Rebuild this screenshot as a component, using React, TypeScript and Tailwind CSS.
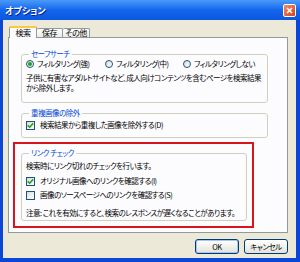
import React from "react";

const jp = "font-['Noto_Sans_CJK_JP',sans-serif] [font-feature-settings:'palt']";

const Radio: React.FC<{ checked?: boolean; label: string; width: string }> = ({ checked, label, width }) => (
  <div className={`flex items-center h-[10px] ${width}`}>
    <div className="w-[8px] h-[8px] rounded-full border border-[#1c5180] bg-gradient-to-br from-[#dcdcd5] to-white flex items-center justify-center shrink-0">
      {checked && <div className="w-[4px] h-[4px] rounded-full bg-[#21a121]" />}
    </div>
    <span className="ml-[3px] leading-[10px] whitespace-nowrap">{label}</span>
  </div>
);

const Check: React.FC<{ checked?: boolean; label: string }> = ({ checked, label }) => (
  <div className="flex items-center h-[10px]">
    <div className="w-[9px] h-[9px] border border-[#1c5180] bg-gradient-to-br from-[#dcdcd5] to-white flex items-center justify-center shrink-0">
      {checked && (
        <svg width="7" height="7" viewBox="0 0 7 7">
          <path d="M0.8 3.4 L2.6 5.2 L6.2 1.4" stroke="#21a121" strokeWidth="1.6" fill="none" />
        </svg>
      )}
    </div>
    <span className="ml-[5px] leading-[10px] whitespace-nowrap">{label}</span>
  </div>
);

const Group: React.FC<{ title: string; className: string; children: React.ReactNode }> = ({ title, className, children }) => (
  <fieldset className={`border border-[#d0d0bf] rounded-[3px] ${className}`}>
    <legend className="ml-[3px] px-[2px] text-[#0046d5] leading-[10px]">{title}</legend>
    {children}
  </fieldset>
);

export default function App() {
  return (
    <div className={`w-[300px] h-[262px] bg-[#0a46d8] flex flex-col text-[7.5px] tracking-[-0.5px] text-black ${jp}`}>
      {/* title bar */}
      <div className="h-[20px] shrink-0 flex items-center justify-between bg-gradient-to-b from-[#4a9af9] via-[#1466ec] to-[#0a58e0] pl-[5px] pr-[4px]">
        <span className="text-white font-bold text-[9px] tracking-normal leading-none [text-shadow:1px_1px_0_#0a1f8c]">オプション</span>
        <div className="w-[13px] h-[13px] rounded-[2px] border border-white bg-gradient-to-br from-[#f08c6a] to-[#d2400f] flex items-center justify-center">
          <svg width="7" height="7" viewBox="0 0 7 7">
            <path d="M1 1 L6 6 M6 1 L1 6" stroke="white" strokeWidth="1.5" />
          </svg>
        </div>
      </div>

      {/* body */}
      <div className="flex-1 ml-[3px] mr-[4px] mb-[4px] bg-[#ece9d8] flex flex-col pl-[5px] pr-[8px] pt-[7px]">
        {/* tabs */}
        <div className="flex items-end ml-[1px] h-[11px] relative z-10 -mb-px text-[8px]">
          <div className="w-[28px] h-[12px] bg-[#fcfcfe] border-x border-[#919b9c] border-t-[2px] border-t-[#ffc83c] rounded-t-[2px] flex items-center justify-center leading-none">
            検索
          </div>
          <div className="w-[26px] h-[9px] bg-gradient-to-b from-white to-[#ecebe6] border-r border-t border-[#919b9c] rounded-t-[2px] flex items-center justify-center leading-none mb-px">
            保存
          </div>
          <div className="w-[27px] h-[9px] bg-gradient-to-b from-white to-[#ecebe6] border-r border-t border-[#919b9c] rounded-t-[2px] flex items-center justify-center leading-none mb-px">
            その他
          </div>
        </div>

        {/* panel */}
        <div className="w-[280px] h-[196px] bg-[#fcfcfe] border border-[#919b9c] flex flex-col">
          <Group title="セーフサーチ" className="ml-[12px] mt-[11px] w-[247px] h-[54px] px-[4px]">
            <div className="flex">
              <Radio checked label="フィルタリング(強)" width="w-[79px]" />
              <Radio label="フィルタリング(中)" width="w-[78px]" />
              <Radio label="フィルタリングしない" width="w-[80px]" />
            </div>
            <div className="mt-[4px] leading-[10px] whitespace-nowrap">
              <div>子供に有害なアダルトサイトなど、成人向けコンテンツを含むページを検索結果</div>
              <div>から除外します。</div>
            </div>
          </Group>

          <Group title="重複画像の除外" className="ml-[12px] mt-[5px] w-[247px] h-[30px] px-[4px]">
            <div className="mt-[2px]">
              <Check checked label="検索結果から重複した画像を除外する(D)" />
            </div>
          </Group>

          <div className="ml-[4px] mt-[4px] w-[241px] border-2 border-[#d8141c] pt-[4px] pb-[5px] pl-[6px]">
            <Group title="リンク チェック" className="w-[226px] h-[73px] px-[4px]">
              <div className="pt-[3px] leading-[9px]">検索時にリンク切れのチェックを行います。</div>
              <div className="mt-[6px] flex flex-col gap-[4px]">
                <Check checked label="オリジナル画像へのリンクを確認する(I)" />
                <Check label="画像のソースページへのリンクを確認する(S)" />
              </div>
              <div className="mt-[8px] leading-[9px] whitespace-nowrap">注意: これを有効にすると、検索のレスポンスが遅くなることがあります。</div>
            </Group>
          </div>
        </div>

        {/* buttons */}
        <div className="flex justify-end gap-[5px] mt-[6px]">
          <button className="w-[44px] h-[15px] rounded-[3px] border border-[#003c74] bg-gradient-to-b from-white to-[#e3e3db] shadow-[inset_0_0_0_1px_#a8c6f5] leading-none">
            OK
          </button>
          <button className="w-[44px] h-[15px] rounded-[3px] border border-[#003c74] bg-gradient-to-b from-white to-[#e3e3db] leading-none">
            キャンセル
          </button>
        </div>
      </div>
    </div>
  );
}
